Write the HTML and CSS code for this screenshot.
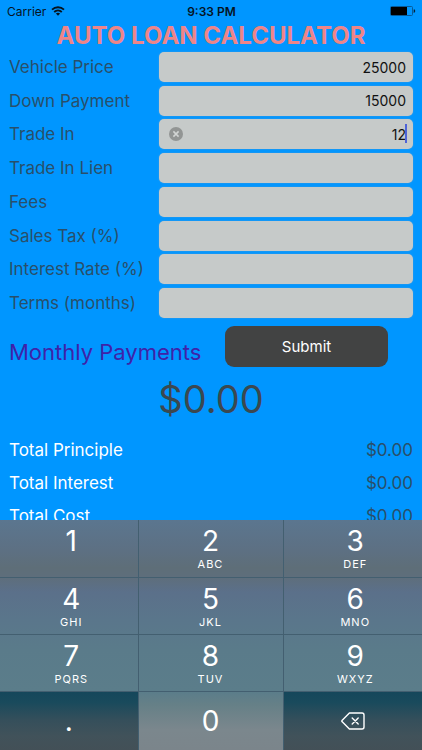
FILE: index.html
```html
<!DOCTYPE html>
<html lang="en">
<head>
    <meta charset="UTF-8">
    <title>Auto Loan Calculator</title>
    <meta name="viewport" content="width=device-width, initial-scale=1.0">
    <link rel="stylesheet" href="styles.css">
</head>
<body>

<div class="status-bar">
    <div class="carrier">
        <span>Carrier</span>
        <svg width="14" height="10" viewBox="0 0 14 10" aria-hidden="true">
            <g fill="none" stroke="#06141f" stroke-width="1.8">
                <path d="M1 3.7C4.4.4 9.6.4 13 3.7" />
                <path d="M3.2 6C5.4 3.9 8.6 3.9 10.8 6" />
            </g>
            <path d="M4.9 7.6C6.1 6.5 7.9 6.5 9.1 7.6L7 9.8z" fill="#06141f" />
        </svg>
    </div>
    <time>9:33 PM</time>
    <div class="battery">
        <svg width="26" height="10" viewBox="0 0 26 10" role="img" aria-label="Battery">
            <rect x=".5" y=".5" width="22" height="9" rx="1" fill="none" stroke="#075a98" />
            <rect x="1" y="1" width="16" height="8" fill="#000" />
            <path d="M24 3.5c1 .3 1 2.7 0 3z" fill="#06141f" stroke="#06141f" stroke-width=".6" />
        </svg>
    </div>
</div>

<main>
    <h1>AUTO LOAN CALCULATOR</h1>

    <form>
        <div class="fields">
            <div class="field">
                <label for="price">Vehicle Price</label>
                <div class="box"><input id="price" type="text" inputmode="decimal" value="25000"></div>
            </div>
            <div class="field">
                <label for="down">Down Payment</label>
                <div class="box"><input id="down" type="text" inputmode="decimal" value="15000"></div>
            </div>
            <div class="field">
                <label for="trade">Trade In</label>
                <div class="box">
                    <input id="trade" type="text" inputmode="decimal" value="12">
                    <button class="clear" type="button" aria-label="Clear">
                        <svg width="14" height="14" viewBox="0 0 14 14">
                            <circle cx="7" cy="7" r="7" fill="#929594" />
                            <path d="M4.4 4.4l5.2 5.2M9.6 4.4L4.4 9.6" stroke="#d2d5d4" stroke-width="1.5" />
                        </svg>
                    </button>
                    <span class="caret"></span>
                </div>
            </div>
            <div class="field">
                <label for="lien">Trade In Lien</label>
                <div class="box"><input id="lien" type="text" inputmode="decimal"></div>
            </div>
            <div class="field">
                <label for="fees">Fees</label>
                <div class="box"><input id="fees" type="text" inputmode="decimal"></div>
            </div>
            <div class="field">
                <label for="tax">Sales Tax (%)</label>
                <div class="box"><input id="tax" type="text" inputmode="decimal"></div>
            </div>
            <div class="field">
                <label for="rate">Interest Rate (%)</label>
                <div class="box"><input id="rate" type="text" inputmode="decimal"></div>
            </div>
            <div class="field">
                <label for="terms">Terms (months)</label>
                <div class="box"><input id="terms" type="text" inputmode="decimal"></div>
            </div>
        </div>

        <div class="payment">
            <h2>Monthly Payments</h2>
            <button class="submit" type="button">Submit</button>
        </div>
    </form>

    <p class="monthly">$0.00</p>

    <dl class="totals">
        <div><dt>Total Principle</dt><dd>$0.00</dd></div>
        <div><dt>Total Interest</dt><dd>$0.00</dd></div>
        <div><dt>Total Cost</dt><dd>$0.00</dd></div>
    </dl>
</main>

<div class="keypad">
    <button class="key side" type="button">1</button>
    <button class="key" type="button">2<small>ABC</small></button>
    <button class="key side" type="button">3<small>DEF</small></button>
    <button class="key side" type="button">4<small>GHI</small></button>
    <button class="key" type="button">5<small>JKL</small></button>
    <button class="key side" type="button">6<small>MNO</small></button>
    <button class="key side" type="button">7<small>PQRS</small></button>
    <button class="key" type="button">8<small>TUV</small></button>
    <button class="key side" type="button">9<small>WXYZ</small></button>
    <button class="key dark" type="button">.</button>
    <button class="key zero" type="button">0</button>
    <button class="key dark" type="button" aria-label="Delete">
        <svg width="24" height="18" viewBox="0 0 24 18" fill="none" stroke="#fff" stroke-width="1.4" stroke-linejoin="round" stroke-linecap="round">
            <path d="M8.4 1H21a2 2 0 0 1 2 2v12a2 2 0 0 1-2 2H8.4L1 9.6a.8.8 0 0 1 0-1.2z" />
            <path d="M11.2 6l6 6M17.2 6l-6 6" />
        </svg>
    </button>
</div>

</body>
</html>
```
FILE: styles.css
```css
* { box-sizing: border-box; }
:root {
    --bg-color: #0096ff;
    --text-color: #294f6a;
    --field-color: #c6cac9;
    --line-color: #435f70;
}
html { height: 100%; }
body {
    margin: 0;
    height: 100%;
    overflow: hidden;
    background-color: var(--bg-color);
    color: var(--text-color);
    font-family: Inter, "Liberation Sans", sans-serif;
}
button, input {
    font-family: inherit;
    border: none;
}

.status-bar {
    display: grid;
    grid-template-columns: 1fr auto 1fr;
    align-items: center;
    height: 22px;
    padding: 0 6px 0 7px;
    color: #06141f;
    font-size: 12px;
}
.status-bar time { font-weight: 600; }
.carrier {
    display: flex;
    align-items: center;
    gap: 5px;
}
.battery {
    display: flex;
    justify-content: flex-end;
}

h1 {
    margin: 0;
    color: #ee8588;
    font-size: 24px;
    font-weight: 700;
    line-height: 28px;
    text-align: center;
}

main { padding: 0 9px; }
.fields {
    display: grid;
    align-content: space-between;
    min-height: 266px;
    margin-top: 2px;
}
.field {
    display: grid;
    grid-template-columns: 150px 1fr;
    align-items: center;
}
.field label {
    font-size: 17px;
    line-height: 30px;
    white-space: nowrap;
}
.box {
    position: relative;
    height: 30px;
}
.box input {
    display: block;
    width: 100%;
    height: 100%;
    padding: 0 7px;
    border-radius: 5px;
    outline: none;
    background-color: var(--field-color);
    box-shadow: 0 0 2px #4a9edb;
    color: #111;
    font-size: 14px;
    text-align: right;
}
.clear {
    position: absolute;
    top: 8px;
    left: 10px;
    padding: 0;
    background: none;
    line-height: 0;
}
.caret {
    position: absolute;
    top: 5px;
    right: 6px;
    width: 2px;
    height: 19px;
    background-color: #4e63d8;
}

.payment {
    display: flex;
    justify-content: space-between;
    align-items: flex-end;
    margin-top: 8px;
    padding-right: 25px;
}
.payment h2 {
    margin: 0;
    color: #3f22a8;
    font-size: 22px;
    font-weight: 400;
    line-height: 30px;
    white-space: nowrap;
}
.submit {
    width: 163px;
    height: 41px;
    border-radius: 9px;
    background-color: #424343;
    color: #fff;
    font-size: 15px;
}

.monthly {
    margin: 7px 0 10px;
    color: #3b4850;
    font-size: 38px;
    line-height: 50px;
    text-align: center;
}

.totals {
    margin: 0;
    font-size: 17px;
    line-height: 33px;
}
.totals div {
    display: flex;
    justify-content: space-between;
}
.totals dt { color: #fff; }
.totals dd { margin: 0; }

/* keyboard slides over the bottom of the form */
.keypad {
    position: fixed;
    right: 0;
    bottom: 0;
    left: 0;
    display: grid;
    grid-template-columns: 1fr 145px 1fr;
    grid-template-rows: 58px 57px 57px 58px;
    background: linear-gradient(#5b768f 0, #5d7083 30px, #5e6e78 48px, #5e6e7c 58px, #5b708a 72px, #5a768b 100px, #5a7b8a 130px, #5b7d8a 172px, #668087 185px, #7b878d 210px, #7b858b 230px);
}
.key {
    display: flex;
    flex-direction: column;
    align-items: center;
    padding: 4px 0 0;
    border-right: 1px solid var(--line-color);
    border-bottom: 1px solid var(--line-color);
    background: none;
    color: #fff;
    font-size: 28px;
    line-height: 34px;
}
.key:nth-child(3n) { border-right: none; }
.key small {
    font-size: 11px;
    line-height: 12px;
    letter-spacing: 1px;
}
.side { padding-left: 5px; }
.zero, .dark {
    justify-content: center;
    padding: 0;
    border-bottom: none;
}
.dark { background: linear-gradient(#15475b 0, #194a5c 10px, #354f5b 28px, #41525a 44px, #435057 58px); }
```
